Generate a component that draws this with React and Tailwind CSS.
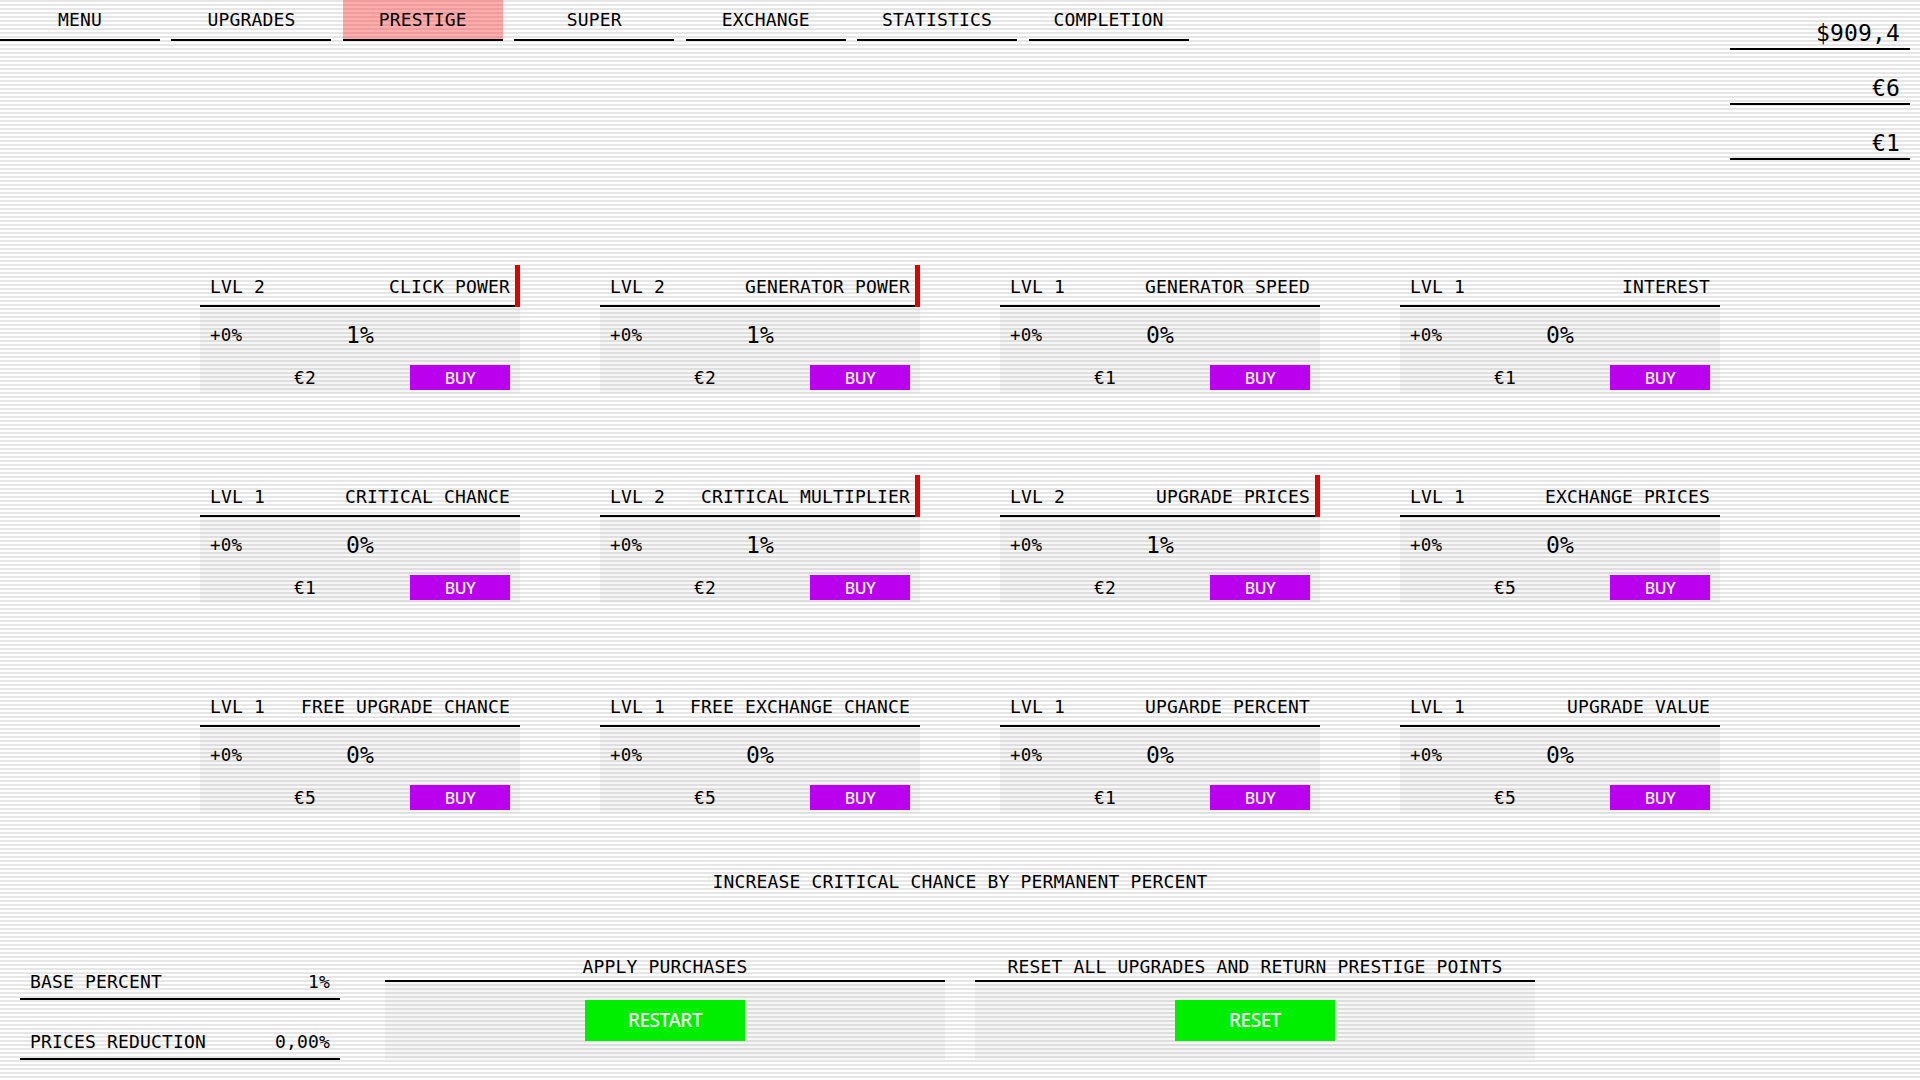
const mono = { fontFamily: '"DejaVu Sans Mono", monospace' };
const label = { fontFamily: '"Noto Sans", sans-serif' };
const tabs = ["MENU","UPGRADES","PRESTIGE","SUPER","EXCHANGE","STATISTICS","COMPLETION"];
const cards = [
 [2,"CLICK POWER","1%","€2",true],[2,"GENERATOR POWER","1%","€2",true],[1,"GENERATOR SPEED","0%","€1"],[1,"INTEREST","0%","€1"],
 [1,"CRITICAL CHANCE","0%","€1"],[2,"CRITICAL MULTIPLIER","1%","€2",true],[2,"UPGRADE PRICES","1%","€2",true],[1,"EXCHANGE PRICES","0%","€5"],
 [1,"FREE UPGRADE CHANCE","0%","€5"],[1,"FREE EXCHANGE CHANCE","0%","€5"],[1,"UPGARDE PERCENT","0%","€1"],[1,"UPGRADE VALUE","0%","€5"],
];
function Card({c}){
  return <div className="w-[320px] h-[130px]">
    <div className="relative h-[42px] border-b-2 border-black flex items-end justify-between px-[10px] pb-[5px] text-[18px] leading-[26px]">
      <span className="whitespace-pre">LVL {c[0]}</span><span>{c[1]}</span>
      {c[4] && <div className="absolute right-0 top-0 bottom-[-2px] w-[5px] bg-[#e00000]"/>}
    </div>
    <div className="h-[86px] bg-[rgba(0,0,0,0.03)] flex flex-col">
      <div className="h-[58px] grid grid-cols-[1fr_auto_1fr] items-center px-[10px] pb-[2px]"><span className="text-[17.5px]">+0%</span><span className="text-[23px]">{c[2]}</span><span/></div>
      <div className="h-[25px] flex items-center justify-between pl-[94px] pr-[10px]"><span className="text-[18px]">{c[3]}</span><button className="w-[100px] h-[25px] bg-[#bb00ee] text-white text-[16px] font-medium tracking-tight" style={label}>BUY</button></div>
    </div>
  </div>;
}
export default function App(){
 return <div className="w-[1920px] h-[1080px] overflow-hidden relative text-black tracking-[0.01em] bg-[repeating-linear-gradient(to_bottom,#e6e6e6_0px,#e6e6e6_2px,#ffffff_2px,#ffffff_4px)]" style={mono}>
  <div className="flex items-start justify-between">
    <div className="flex gap-[11.43px]">
      {tabs.map((t,i)=><div key={t} className={"w-[160px] h-[41px] border-b-2 border-black text-center text-[18px] leading-[40px] "+(i===2?"bg-[rgba(255,0,0,0.32)]":"")}>{t}</div>)}
    </div>
    <div className="w-[180px] mr-[10px] mt-[5px] flex flex-col gap-[10px]">
      {["$909,4","€6","€1"].map((t,i)=><div key={i} className="h-[45px] border-b-2 border-black text-right pr-[10px] text-[23px] leading-[56px]">{t}</div>)}
    </div>
  </div>
  <div className="absolute left-[200px] top-[265px] grid grid-cols-[320px_320px_320px_320px] gap-x-[80px] gap-y-[80px]">
    {cards.map((c,i)=><Card key={i} c={c}/>)}
  </div>
  <div className="absolute left-0 right-0 top-[869px] text-center text-[18px] leading-[26px]">INCREASE CRITICAL CHANCE BY PERMANENT PERCENT</div>
  <div className="absolute left-[20px] top-[960px] w-[320px]">
    <div className="h-[40px] border-b-2 border-black flex justify-between items-end px-[10px] pb-[3px] text-[18px]"><span>BASE PERCENT</span><span>1%</span></div>
    <div className="h-[40px] mt-[20px] border-b-2 border-black flex justify-between items-end px-[10px] pb-[3px] text-[18px]"><span>PRICES REDUCTION</span><span>0,00%</span></div>
  </div>
  {[["APPLY PURCHASES","RESTART",385],["RESET ALL UPGRADES AND RETURN PRESTIGE POINTS","RESET",975]].map(([a,b,x])=>
    <div key={a} className="absolute top-[950px] w-[560px]" style={{left:x}}>
      <div className="h-[32px] border-b-2 border-black text-center text-[18px] leading-[34px]">{a}</div>
      <div className="h-[78px] bg-[rgba(0,0,0,0.03)] pt-[18px] flex justify-center items-start"><button className="w-[160px] h-[41px] bg-[#00ee00] text-white text-[19px] font-medium tracking-tight" style={label}>{b}</button></div>
    </div>)}
 </div>;
}
